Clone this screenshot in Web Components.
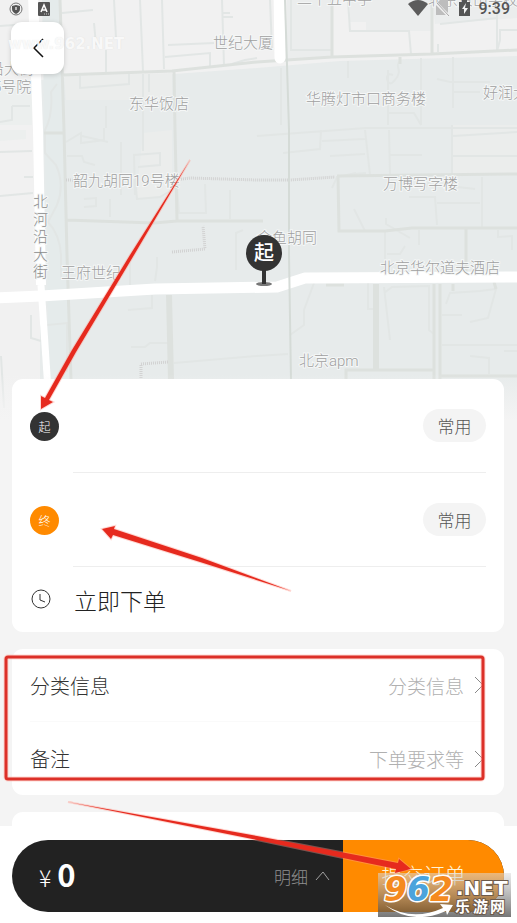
<!DOCTYPE html>
<html lang="zh-CN">
<head>
<meta charset="UTF-8">
<meta name="viewport" content="width=device-width, initial-scale=1.0">
<title>立即下单</title>
<style>
    body {
        margin: 0;
        background: #f4f4f4;
        font-family: 'Noto Sans CJK SC', sans-serif;
        font-weight: 300;
        color: #333333;
    }
</style>
</head>
<body>

<order-page>
    <city-map slot="map"></city-map>

    <panel-card>
        <address-row kind="start" mark="起" label="起点"></address-row>
        <address-row kind="end" mark="终" label="终点"></address-row>
        <time-row>立即下单</time-row>
    </panel-card>

    <panel-card>
        <option-row value="分类信息">分类信息</option-row>
        <option-row value="下单要求等">备注</option-row>
    </panel-card>

    <panel-card class="siguiente"></panel-card>

    <submit-bar slot="footer" total="0"></submit-bar>
    <guide-marks slot="over"></guide-marks>
</order-page>

<script>
class OrderPage extends HTMLElement {
    constructor() {
        super();
        this.attachShadow({ mode: 'open' });
    }

    connectedCallback() {
        this.shadowRoot.innerHTML = `<style>
            :host {
                display: flex;
                flex-direction: column;
                position: relative;
                height: 100vh;
                min-height: 640px;
                overflow: hidden;
            }

            main {
                position: relative;
                flex: 1;
                min-height: 0;
                overflow: hidden;
                display: flex;
                flex-direction: column;
                gap: 17px;
                padding: 0 13px 0 12px;
            }

            ::slotted(.siguiente) {
                flex: 1 0 80px;
            }
        </style>
        <slot name="map"></slot>
        <main><slot></slot></main>
        <slot name="footer"></slot>
        <slot name="over"></slot>
        `;
    }
}

class CityMap extends HTMLElement {
    constructor() {
        super();
        this.attachShadow({ mode: 'open' });
    }

    connectedCallback() {
        this.shadowRoot.innerHTML = `<style>
            :host {
                display: block;
                position: relative;
                height: 379px;
                flex: none;
            }

            /* the map runs on a little under the first card and fades out */
            .mapa {
                position: absolute;
                top: 0;
                left: 0;
                width: 100%;
                height: 420px;
            }

            .mapa text {
                font-family: Roboto, 'Noto Sans CJK SC', sans-serif;
                font-size: 15px;
                fill: #a0a0a0;
                stroke: #f5f7f7;
                stroke-width: 2px;
                paint-order: stroke;
            }

            header {
                position: relative;
                display: flex;
                align-items: center;
                justify-content: space-between;
                height: 17px;
                padding: 0 7px 0 9px;
                font-family: Roboto, sans-serif;
                font-size: 16px;
                font-weight: 500;
                line-height: 17px;
                color: #555555;
            }

            header div {
                display: flex;
                align-items: center;
                gap: 8px;
            }

            header .iconos {
                gap: 15px;
            }

            header svg {
                display: block;
            }

            .volver {
                position: relative;
                display: flex;
                align-items: center;
                justify-content: center;
                width: 53px;
                height: 52px;
                margin: 5px 0 0 11px;
                padding: 0;
                border: 0;
                border-radius: 11px;
                background: #ffffff;
                box-shadow: 0 1px 5px rgba(0,0,0,0.16);
            }

            .marca {
                position: absolute;
                left: 8px;
                top: 36px;
                font: bold 15px/16px 'DejaVu Sans', sans-serif;
                color: rgba(252,252,252,0.9);
                text-shadow: 0 0 1px rgba(190,190,190,0.4);
            }
        </style>
        `+ this.template;
    }

    get template() {
    return `
        <svg class="mapa" viewBox="0 0 517 420" preserveAspectRatio="xMidYMin slice" role="img" aria-label="地图">
            <defs>
                <linearGradient id="fade" x1="0" y1="0" x2="0" y2="1">
                    <stop offset="0" stop-color="#f4f4f4" stop-opacity="0"/>
                    <stop offset="1" stop-color="#f4f4f4"/>
                </linearGradient>
            </defs>
            <rect width="517" height="420" fill="#f1f1f1"/>
            <!-- blocks -->
            <path d="M40 80L62 78L174 74L257 68L340 61L517 56V420H40z" fill="#e7ebeb"/>
            <path d="M42 0H61L71 420H50z" fill="#e5ebeb"/>
            <path d="M287 0H331V56L287 60zM350 0H432V31H379V30H366V22H350zM432 0H517V18L435 24z" fill="#ebeded"/>
            <path d="M64 76L172 73V100H66zM143 133L172 130V195L136 200zM453 125H517V174H453z" fill="#ebedec"/>
            <path d="M0 84L32 82V125H0zM0 130H26V139L0 141z" fill="#ecefee"/>
            <!-- lanes -->
            <g fill="none" stroke="#e2e6e5" stroke-width="2">
                <path d="M62 13L93 10M114 0L116 38M94 23L96 45M106 50V72M140 0L143 71M162 0L164 69M168 45L214 43M165 57L210 53V66M222 0L224 65M222 13H230M222 17H233M232 64L245 60L257 58M0 26L28 24"/>
                <path d="M80 76V88L129 84V74M57 84L51 92Q53 115 45 130V153L56 165Q65 185 57 205L48 222Q60 235 61 255V280M143 74V135M149 74V92M106 106V128M121 142V195M67 156H82L84 162L95 165M82 136L108 142M66 142L81 133V143L104 140V128M135 195L134 155L160 153V165L138 167M143 127V151M135 177L137 199L160 197L172 190M84 199L96 198V206L84 207M110 199V217M12 106H30M12 106V120L0 122M0 152L32 151M24 177H33M0 196L33 193"/>
                <path d="M31 315V338L41 341M1 356L4 408M47 325L67 323V372M152 295V308L128 310M155 281L157 267V257M130 263V285M131 347H145L150 343H168M174 363L257 356L288 354M236 270V233L243 230M205 184L206 213H179L177 187M230 190V219"/>
                <path d="M270 0L272 49M291 0V50H331M348 0L350 31L378 31H409L411 54M438 52V44M257 136L284 134L366 128H517M281 68V125M348 61V78M283 153L320 149L321 130M322 141L365 139M330 156L365 154M388 70V125M388 124V113L414 113L421 125M365 130L370 175M393 75C383 70 387 90 394 81C405 70 393 66 400 61M389 130L390 175M390 155H422M421 58V125M453 57V108M437 79L450 82H490M453 92H480M452 125V174M453 136L517 132M453 156H517M497 0V51L500 40V30H517M440 24L497 18"/>
                <path d="M332 188L337 177L356 173M354 174L366 173M409 197H435L437 225M437 203H480M482 177V228M424 190L430 180M458 187L475 189M354 209L365 231M386 218V224L410 238M385 230V260M387 254H400L405 246M419 230V245M498 230V237L512 236V250M314 283L304 310V325L290 335M368 283V309H373M384 288V287L390 340M384 293L392 287L429 286V330L434 334M446 304L450 293L480 291L496 289L488 318L470 322M442 315H462M442 345H517M470 356L489 358V374M504 351H517"/>
            </g>
            <!-- streets -->
            <g fill="none" stroke="#dde1de" stroke-width="3">
                <path d="M60 0L64 130L67 255L71 380M44 133H64M62 75L172 71L257 62L332 57L432 54L517 50M174 71L175 130L177 220M66 220L154 223L177 221L263 221M332 0V57M432 0V54M400 57V64M337 176L420 175L517 174M338 176L339 231H385L412 228H517M466 228V272M346 380V370H434M440 376H517M453 284V291M494 282L496 289M326 285H344"/>
                <path d="M169 295L171 380" stroke-width="6"/>
                <path d="M376 284V370" stroke-width="6"/>
                <path d="M434 284V380M440 284V380"/>
            </g>
            <g fill="none" stroke="#d2d2d2" stroke-width="3" stroke-dasharray="1 1">
                <path d="M66 180H73M175 180L190 178L257 180H290L335 177M172 252L205 249L203 226M141 380V364L168 362"/>
            </g>
            <!-- avenues -->
            <g fill="none" stroke="#ffffff">
                <path d="M33 -5L38 130L41 285" stroke-width="10"/>
                <path d="M41 285L48 390" stroke-width="7"/>
                <path d="M279 -10L280 58" stroke-width="11" stroke-linecap="round"/>
                <path d="M-5 298L41 296L155 289L277 287L305 278L517 277" stroke-width="11" stroke-linejoin="round"/>
            </g>
            <path d="M285 0L289 130V255L291 380" fill="none" stroke="#d5dbd7" stroke-width="2"/>
            <g>
                <text x="213" y="48">世纪大厦</text>
                <text x="297" y="4">二十五中学</text>
                <text x="428" y="5">北京景山学校</text>
                <text x="483" y="98">好润大厦</text>
                <text x="129" y="109">东华饭店</text>
                <text x="306" y="104">华腾灯市口商务楼</text>
                <text x="-11" y="74">沿大街</text>
                <text x="-7" y="92">5号院</text>
                <text x="73" y="186">韶九胡同19号楼</text>
                <text x="383" y="189">万博写字楼</text>
                <text x="257" y="243">金鱼胡同</text>
                <text x="380" y="273">北京华尔道夫酒店</text>
                <text x="61" y="278">王府世纪</text>
                <text x="299" y="366">北京apm</text>
            </g>
            <g style="fill: #8c8c8c">
                <text style="fill: inherit"><tspan x="33" y="207">北</tspan><tspan x="33" y="225">河</tspan><tspan x="33" y="242">沿</tspan><tspan x="33" y="260">大</tspan><tspan x="33" y="277">街</tspan></text>
            </g>
            <!-- pickup pin -->
            <ellipse cx="264" cy="284" rx="8" ry="2" fill="#777777"/>
            <path d="M262 266H266V284H262z" fill="#333333"/>
            <circle cx="264" cy="253" r="18" fill="#333333"/>
            <text x="264" y="260" text-anchor="middle" style="font-size: 20px; font-weight: 500; fill: #ffffff; stroke: none">起</text>
            <rect y="374" width="517" height="46" fill="url(#fade)"/>
        </svg>

        <header>
            <div class="iconos">
                <svg width="14" height="16" viewBox="0 0 14 16"><circle cx="7" cy="8" r="6" fill="none" stroke="#777777"/><path d="M7 4L11 5V8Q11 11 7 13Q3 11 3 8V5z" fill="#555555"/><path d="M7 6V9" stroke="#bbbbbb" stroke-width="2"/></svg>
                <svg width="12" height="14" viewBox="0 0 12 14"><rect width="12" height="14" rx="1" fill="#555555"/><path d="M3 10L6 3L9 10M4 8H8" fill="none" stroke="#ffffff" stroke-width="1.5"/><path d="M6 12H11" stroke="#cccccc" stroke-dasharray="1 1"/></svg>
            </div>
            <div>
                <svg width="20" height="17" viewBox="0 0 20 17"><path d="M0 4Q10 -4 20 4L10 16z" fill="#5c5c5c"/></svg>
                <svg width="14" height="17" viewBox="0 0 14 17"><path d="M0 4L4 0H12V15H0z" fill="#bdbdbd"/><path d="M0 3L13 16" stroke="#f1f1f1" stroke-width="3"/><path d="M1 3L13 16" stroke="#a9a9a9" stroke-width="1"/></svg>
                <svg width="13" height="17" viewBox="0 0 13 17"><path d="M1 2H4V0H9V2H12V16H1z" fill="#555555"/><path d="M8 3L4 9H6V14L10 8H7z" fill="#f4f4f4"/></svg>
                <span>9:39</span>
            </div>
        </header>

        <button class="volver" aria-label="返回">
            <svg width="12" height="20" viewBox="0 0 12 20"><path d="M11 1L2 10L11 19" fill="none" stroke="#111111" stroke-width="1.5"/></svg>
        </button>
        <span class="marca">www.962.NET</span>
        `;
    }
}

class PanelCard extends HTMLElement {
    constructor() {
        super();
        this.attachShadow({ mode: 'open' });
    }

    connectedCallback() {
        this.shadowRoot.innerHTML = `<style>
            :host {
                display: flex;
                flex-direction: column;
                flex: none;
                box-sizing: border-box;
                padding: 0 18px;
                border-radius: 11px;
                background: #ffffff;
            }
        </style>
        <slot></slot>
        `;
    }
}

class AddressRow extends HTMLElement {
    constructor() {
        super();
        this.attachShadow({ mode: 'open' });
    }

    connectedCallback() {
        this.shadowRoot.innerHTML = `<style>
            :host {
                display: flex;
                align-items: center;
                gap: 14px;
            }

            .punto {
                display: flex;
                align-items: center;
                justify-content: center;
                width: 29px;
                height: 29px;
                border-radius: 50%;
                background: #333333;
                color: #ffffff;
                font-size: 12px;
            }

            :host([kind="end"]) .punto {
                background: #ff8a00;
            }

            .campo {
                flex: 1;
                display: flex;
                align-items: center;
                height: 93px;
                border-bottom: 1px solid #eeeeee;
            }

            input {
                flex: 1;
                min-width: 0;
                height: 40px;
                border: 0;
                padding: 0;
                background: transparent;
                font: inherit;
                font-size: 17px;
                outline: none;
            }

            button {
                width: 63px;
                height: 33px;
                padding: 0;
                border: 0;
                border-radius: 17px;
                background: #f4f4f4;
                color: #555555;
                font: inherit;
                font-size: 17px;
                line-height: 33px;
            }
        </style>
        <label class="punto" for="direccion">${this.getAttribute('mark')}</label>
        <div class="campo">
            <input id="direccion" type="text" aria-label="${this.getAttribute('label')}">
            <button>常用</button>
        </div>
        `;
    }
}

class TimeRow extends HTMLElement {
    constructor() {
        super();
        this.attachShadow({ mode: 'open' });
    }

    connectedCallback() {
        this.shadowRoot.innerHTML = `<style>
            :host {
                display: block;
            }

            button {
                display: flex;
                align-items: center;
                gap: 23px;
                width: 100%;
                height: 65px;
                padding: 0;
                border: 0;
                background: transparent;
                color: #222222;
                font: inherit;
                font-size: 23px;
            }
        </style>
        <button>
            <svg width="21" height="21" viewBox="0 0 21 21" fill="none" stroke="#333333"><circle cx="11" cy="10" r="9"/><path d="M10 5V11L15 13"/></svg>
            <slot></slot>
        </button>
        `;
    }
}

class OptionRow extends HTMLElement {
    constructor() {
        super();
        this.attachShadow({ mode: 'open' });
    }

    connectedCallback() {
        this.shadowRoot.innerHTML = `<style>
            :host {
                display: block;
                box-sizing: border-box;
                height: 73px;
            }

            :host(:not(:last-of-type)) {
                border-bottom: 1px solid #fafafa;
            }

            button {
                display: flex;
                align-items: center;
                width: 100%;
                height: 100%;
                padding: 0 2px 0 0;
                border: 0;
                background: transparent;
                color: #333333;
                font: inherit;
                font-size: 20px;
            }

            .valor {
                margin: 0 10px 0 auto;
                color: #b0b0b0;
                font-size: 19px;
            }
        </style>
        <button>
            <slot></slot>
            <span class="valor">${this.getAttribute('value')}</span>
            <svg width="10" height="18" viewBox="0 0 10 18"><path d="M1 1L9 9L1 17" fill="none" stroke="#888888"/></svg>
        </button>
        `;
    }
}

class SubmitBar extends HTMLElement {
    constructor() {
        super();
        this.attachShadow({ mode: 'open' });
    }

    connectedCallback() {
        this.shadowRoot.innerHTML = `<style>
            :host {
                display: block;
                position: relative;
                flex: none;
                padding: 14px 13px 11px 12px;
                background: #ffffff;
            }

            .barra {
                display: flex;
                height: 72px;
                border-radius: 36px;
                overflow: hidden;
                background: #222222;
            }

            .total {
                flex: 1;
                display: flex;
                align-items: baseline;
                padding-left: 27px;
                color: #ffffff;
                font-size: 23px;
                line-height: 68px;
            }

            .total strong {
                margin-left: 6px;
                font-size: 31px;
                font-weight: bold;
            }

            button {
                padding: 0;
                border: 0;
                font: inherit;
            }

            .detalle {
                display: flex;
                align-items: center;
                gap: 7px;
                padding-right: 13px;
                background: transparent;
                color: #909090;
                font-size: 17px;
            }

            .enviar {
                width: 161px;
                padding-bottom: 5px;
                background: #ff8a00;
                color: #fff3d8;
                font-size: 21px;
            }
        </style>
        <div class="barra">
            <div class="total"><span>¥</span><strong>${this.getAttribute('total')}</strong></div>
            <button class="detalle">明细
                <svg width="15" height="10" viewBox="0 0 15 10"><path d="M1 9L8 1L14 9" fill="none" stroke="#a0a0a0"/></svg>
            </button>
            <button class="enviar">提交订单</button>
        </div>
        `;
    }
}

class GuideMarks extends HTMLElement {
    constructor() {
        super();
        this.attachShadow({ mode: 'open' });
    }

    connectedCallback() {
        this.shadowRoot.innerHTML = `<style>
            :host {
                position: absolute;
                inset: 0;
                pointer-events: none;
            }

            svg {
                display: block;
                width: 100%;
                height: 100%;
            }
        </style>
        <svg viewBox="0 0 517 923">
            <defs>
                <linearGradient id="sombra" x1="0" y1="0" x2="0" y2="1">
                    <stop offset="0" stop-color="#dcdcdc" stop-opacity="0.55"/>
                    <stop offset="1" stop-color="#3c3c3c" stop-opacity="0.7"/>
                </linearGradient>
            </defs>

            <g fill="#e62a1e" stroke="#ff9d90" stroke-opacity="0.4" stroke-width="2" paint-order="stroke">
                <path d="M190 160L134 255L76 352L49 400L53 402L41 409L41 396L45 398L72 350L130 255z"/>
                <path d="M291 591L200 562L113 535L111 539L102 529L115 526L114 529L202 558z"/>
                <path d="M68 802L257 836L398 863L399 859L411 869L395 873L396 869L343 858L257 840z"/>
            </g>
            <rect x="6" y="657" width="477" height="122" rx="2" fill="none" stroke="#ffb3a8" stroke-opacity="0.5" stroke-width="5"/>
            <rect x="6" y="657" width="477" height="122" rx="2" fill="none" stroke="#dc3028" stroke-width="3"/>

            <!-- site stamp -->
            <rect x="378" y="873" width="133" height="44" fill="url(#sombra)"/>
            <text x="384" y="901" font-family="'DejaVu Sans', sans-serif" font-weight="bold" font-style="italic" font-size="33" stroke="#ffffff" stroke-width="3" paint-order="stroke" stroke-linejoin="round"><tspan fill="#f58a1f">9</tspan><tspan fill="#4ba3dc">6</tspan><tspan fill="#f58a1f">2</tspan></text>
            <path d="M385 905Q412 922 443 908L440 904L453 905L447 915L446 911Q412 926 385 905z" fill="#ffffff"/>
            <g fill="#ffffff" stroke="#6d5a4a" stroke-width="2" paint-order="stroke">
                <text x="456" y="895" font-family="'DejaVu Sans', sans-serif" font-weight="bold" font-size="20">.NET</text>
                <text x="455" y="912" font-family="'Noto Sans CJK SC', sans-serif" font-weight="bold" font-size="15"><tspan x="455">乐</tspan><tspan x="473">游</tspan><tspan x="490">网</tspan></text>
            </g>
        </svg>
        `;
    }
}

window.customElements.define('order-page', OrderPage);
window.customElements.define('city-map', CityMap);
window.customElements.define('panel-card', PanelCard);
window.customElements.define('address-row', AddressRow);
window.customElements.define('time-row', TimeRow);
window.customElements.define('option-row', OptionRow);
window.customElements.define('submit-bar', SubmitBar);
window.customElements.define('guide-marks', GuideMarks);
</script>
</body>
</html>
